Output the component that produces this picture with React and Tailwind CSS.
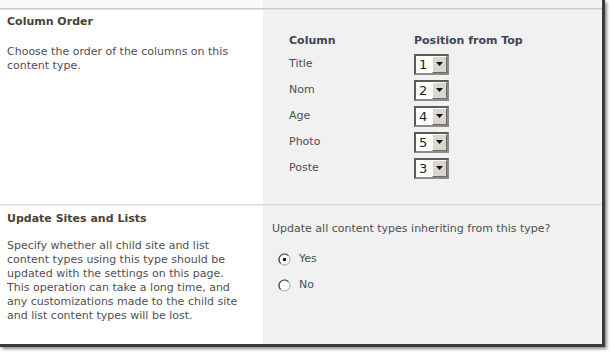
import React from "react";

const FONT = { fontFamily: '"DejaVu Sans", Tahoma, Verdana, sans-serif' };

const columns = [
  { name: "Title", pos: 1 },
  { name: "Nom", pos: 2 },
  { name: "Age", pos: 4 },
  { name: "Photo", pos: 5 },
  { name: "Poste", pos: 3 },
];

function PositionSelect({ value }) {
  return (
    <div className="flex h-[21px] w-[35px] border-2 border-[#5b5b5b] border-r-[#8a8a8a] border-b-[#8a8a8a] bg-white">
      <div className="flex-1 flex items-center pl-[3px] text-[13px] text-[#222] leading-none">{value}</div>
      <div className="w-[15px] flex items-center justify-center bg-[#d9d6cf] border-l border-t border-white border-r border-r-[#6a6a6a] border-b border-b-[#6a6a6a]">
        <svg width="7" height="4" viewBox="0 0 7 4">
          <path d="M0 0h7L3.5 4z" fill="#111" />
        </svg>
      </div>
    </div>
  );
}

function Radio({ checked }) {
  return (
    <svg width="13" height="13" viewBox="0 0 13 13">
      <circle cx="6.5" cy="6.5" r="5.5" fill="#fff" stroke="#a0a0a0" />
      <path d="M2.6 10.4A5.5 5.5 0 0 1 10.4 2.6" fill="none" stroke="#444" strokeWidth="1.2" />
      {checked && <circle cx="6.5" cy="6.5" r="1.7" fill="#111" />}
    </svg>
  );
}

export default function App() {
  return (
    <div className="w-[610px] h-[352px] bg-white text-[11px]" style={FONT}>
      <div className="w-[605px] h-[347px] flex flex-col border-r-[3px] border-b-[3px] border-[#3a3a3a] shadow-[2px_2px_3px_rgba(0,0,0,0.45)]">
        {/* top strip from previous row */}
        <div className="flex h-[8px]">
          <div className="w-[263px] bg-[#fafafa]" />
          <div className="flex-1 bg-[#f1f1f1]" />
        </div>
        <div className="h-[2px] bg-[#c9c9c9] border-b border-[#e4e4e4]" />

        {/* Column Order */}
        <div className="flex h-[194px]">
          <div className="w-[263px] bg-white pl-[7px] pt-[5px]">
            <div className="font-bold text-[#4a4338] leading-[14px]">Column Order</div>
            <p className="mt-[16px] w-[232px] text-[#4f4f4f] leading-[14px]">
              Choose the order of the columns on this content type.
            </p>
          </div>
          <div className="flex-1 bg-[#f1f1f1] pt-[24px] pl-[26px]">
            <div className="flex font-bold text-[#3d4654] leading-[14px]">
              <div className="w-[125px]">Column</div>
              <div>Position from Top</div>
            </div>
            <div className="mt-[3px] flex flex-col">
              {columns.map((c) => (
                <div key={c.name} className="flex items-center h-[26px] text-[#4f4f4f]">
                  <div className="w-[125px]">{c.name}</div>
                  <PositionSelect value={c.pos} />
                </div>
              ))}
            </div>
          </div>
        </div>

        <div className="h-[2px] bg-[#dcdcdc] border-b border-[#ececec]" />

        {/* Update Sites and Lists */}
        <div className="flex flex-1">
          <div className="w-[263px] bg-white pl-[7px] pt-[6px]">
            <div className="font-bold text-[#4a4338] leading-[14px]">Update Sites and Lists</div>
            <p className="mt-[13px] w-[232px] text-[#4f4f4f] leading-[14px]">
              Specify whether all child site and list content types using this type should be
              updated with the settings on this page. This operation can take a long time, and
              any customizations made to the child site and list content types will be lost.
            </p>
          </div>
          <div className="flex-1 bg-[#f1f1f1] pt-[16px] pl-[9px] text-[#4f4f4f]">
            <div className="leading-[14px]">Update all content types inheriting from this type?</div>
            <div className="mt-[10px] flex flex-col pl-[6px]">
              <label className="flex items-center gap-[8px] h-[26px]">
                <Radio checked />
                <span>Yes</span>
              </label>
              <label className="flex items-center gap-[8px] h-[26px]">
                <Radio />
                <span>No</span>
              </label>
            </div>
          </div>
        </div>
      </div>
    </div>
  );
}
